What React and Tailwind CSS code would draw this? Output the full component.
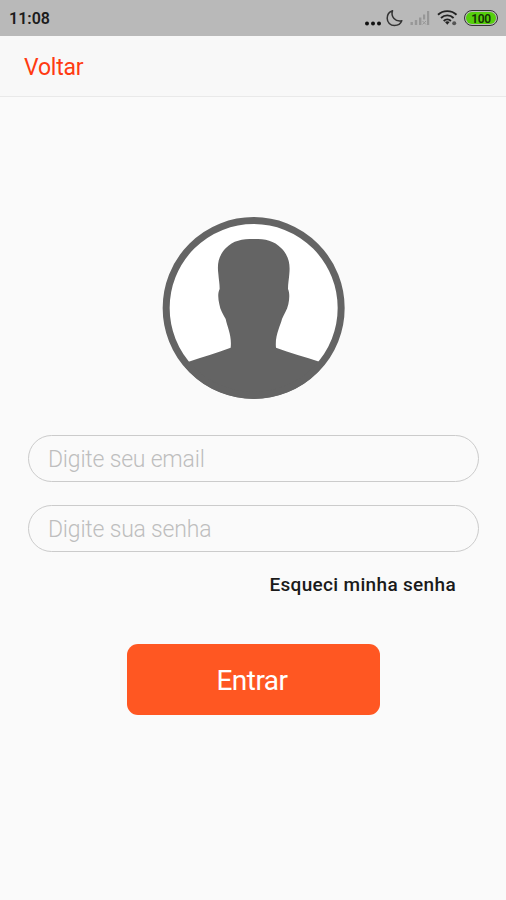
import React, { useState } from 'react';

function StatusBar() {
  return (
    <div className="h-[35.5px] shrink-0 bg-[#b9b9b9] flex items-center justify-between pl-[9px] pr-2 text-[#1c1c1c]">
      <span className="text-[16px] font-semibold leading-none pt-[2px]">11:08</span>
      <div className="flex items-center">
        <svg className="w-[17px] h-[6px] mt-[10px] mr-[5px]" viewBox="0 0 17 6">
          <circle cx="3" cy="3.5" r="2" fill="#111" />
          <circle cx="9" cy="3.5" r="2" fill="#111" />
          <circle cx="15" cy="3.5" r="2" fill="#111" />
        </svg>
        <svg className="w-[17px] h-[18px] mr-[7px]" viewBox="0 0 17 18" fill="none">
          <path
            d="M6.5 1.8C3 3 1.2 6 1.2 9.2C1.2 13.4 4.3 16.5 8.5 16.5C12 16.5 14.8 14.5 15.8 11.8C13 12.4 10 11.8 8 9.6C6 7.4 5.6 4.6 6.5 1.8Z"
            stroke="#333"
            strokeWidth="1.5"
            strokeLinejoin="round"
          />
        </svg>
        <svg className="w-[20px] h-[16px] mr-[7px]" viewBox="0 0 20 16" fill="#979797">
          <rect x="0.5" y="12" width="2.4" height="3" />
          <rect x="4.8" y="10" width="2.4" height="5" />
          <rect x="9" y="7.5" width="2.4" height="7.5" />
          <rect x="13" y="4.5" width="2.2" height="5" />
          <rect x="17" y="1" width="2.2" height="14" />
          <path d="M12.5 11l3.5 3.5M16 11l-3.5 3.5" stroke="#979797" strokeWidth="1" />
        </svg>
        <svg className="w-[21px] h-[17px] mr-[6px]" viewBox="0 0 21 17" fill="none" stroke="#222" strokeWidth="1.9">
          <path d="M1 5.8C6 0.9 14.5 0.9 19.5 5.8" />
          <path d="M4 9C7.6 5.5 13 5.5 16.6 9" />
          <path d="M6.7 12C8.8 10 11.8 10 13.9 12" />
          <path d="M8 13L10.3 15.8L12.6 13Q10.3 11.6 8 13Z" fill="#222" stroke="none" />
          <circle cx="17.2" cy="14.2" r="2" fill="#555" stroke="none" />
        </svg>
        <div className="w-[34px] h-[16px] rounded-full border-[1.5px] border-[#333] bg-[#b9b9b9] p-[1px] flex">
          <div className="flex-1 rounded-full bg-[#55cf0c] flex items-center justify-center text-[12px] tracking-[-0.4px] font-semibold leading-none text-[#153005]">
            <span className="translate-y-[0.5px]">100</span>
          </div>
        </div>
      </div>
    </div>
  );
}

function Avatar() {
  return (
    <svg className="w-[183px] h-[182px] self-center" viewBox="36 36 549 546">
      <defs>
        <clipPath id="avatar-clip">
          <circle cx="311" cy="309" r="272" />
        </clipPath>
      </defs>
      <circle cx="311" cy="309" r="263" fill="#fff" />
      <path
        clipPath="url(#avatar-clip)"
        fill="#646464"
        d="M311 102C345 102 372 106 394 130C416 152 421 176 418 206C417 222 414 234 414 252C419 262 419 280 415 298C411 316 402 328 396 342C392 360 374 392 378 428C420 444 466 456 508 470L600 600H20L116 470C158 456 200 444 242 428C246 392 232 366 227 342C219 328 211 316 208 298C204 281 203 264 209 252C209 234 206 222 205 206C201 176 206 152 227 130C249 106 277 102 311 102Z"
      />
      <circle cx="311" cy="309" r="262.5" fill="none" stroke="#646464" strokeWidth="21" />
    </svg>
  );
}

const inputClass =
  'w-full h-[47px] rounded-[24px] border-[1.5px] border-[#cbcbcb] bg-transparent px-[19px] pt-[2px] text-[23px] tracking-[-0.2px] font-light text-[#333] placeholder:text-[#bebebe] placeholder:opacity-100 outline-none';

export default function App() {
  const [email, setEmail] = useState('');
  const [senha, setSenha] = useState('');

  return (
    <div className="h-screen flex flex-col overflow-hidden bg-[#fafafa] font-['Roboto','Liberation_Sans',sans-serif]">
      <StatusBar />
      <header className="h-[61.5px] shrink-0 flex items-center px-6 bg-[#f8f8f8] border-b border-[#e9e9e9]">
        <button className="pt-[3px] text-[23px] tracking-[-0.2px] leading-none text-[#ff3b12]">Voltar</button>
      </header>

      <main className="flex-1 flex flex-col pt-[120px] pl-7 pr-[27px]">
        <Avatar />
        <form className="flex flex-col mt-9" onSubmit={(e) => e.preventDefault()}>
          <input
            type="email"
            className={inputClass}
            placeholder="Digite seu email"
            value={email}
            onChange={(e) => setEmail(e.target.value)}
          />
          <input
            type="password"
            className={`${inputClass} mt-[23px]`}
            placeholder="Digite sua senha"
            value={senha}
            onChange={(e) => setSenha(e.target.value)}
          />
          <button type="button" className="self-end mt-[22px] mr-[23px] text-[19px] leading-[22px] font-medium tracking-[0.33px] text-[#1a1a1a]">
            Esqueci minha senha
          </button>
          <button type="submit" className="self-center mt-12 w-[253px] h-[71px] rounded-[11px] bg-[#ff5722] pt-[2px] pr-[3px] text-[28px] tracking-[-0.5px] text-white">
            Entrar
          </button>
        </form>
      </main>
    </div>
  );
}
